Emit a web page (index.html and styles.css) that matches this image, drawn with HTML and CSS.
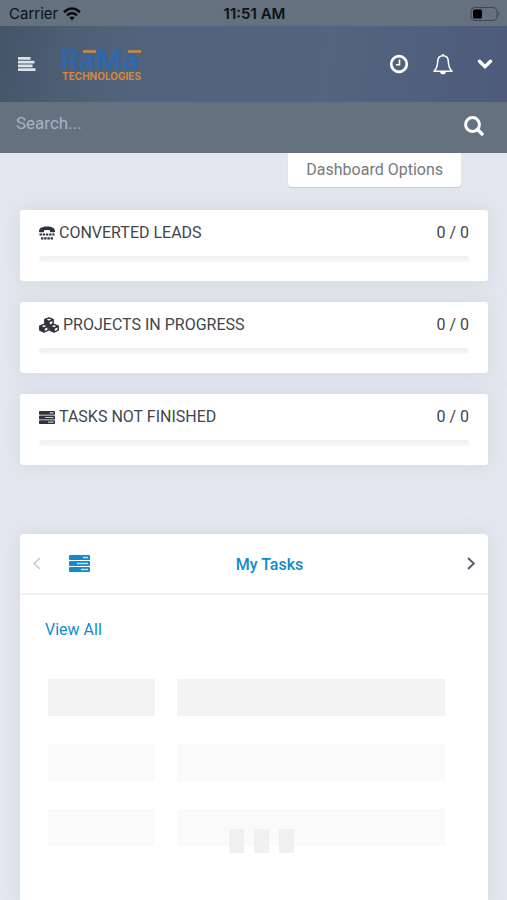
FILE: index.html
```html
<!DOCTYPE html>
<html lang="en">
<head>
<meta charset="utf-8">
<meta name="viewport" content="width=device-width, initial-scale=1">
<title>RaMa Technologies</title>
<link rel="stylesheet" href="styles.css">
</head>
<body>
<svg class="sprite" aria-hidden="true">
  <symbol id="icon-tasks" viewBox="0 0 21 17">
    <rect x="0" y="0" width="21" height="5" rx="1" fill="currentColor"/>
    <rect x="0" y="6" width="21" height="5" rx="1" fill="currentColor"/>
    <rect x="0" y="12" width="21" height="5" rx="1" fill="currentColor"/>
    <path d="M14 2.500h5M8 8.500h11M12 14.500h7" stroke="#fff" stroke-width="1.500" opacity=".75"/>
  </symbol>
</svg>

<div class="status">
  <div class="status-left">
    <span>Carrier</span>
    <svg width="18" height="14" viewBox="0 0 18 14" fill="none" stroke="currentColor" stroke-width="2.600" aria-hidden="true">
      <path d="M1 5.200Q9-2.200 17 5.200M4 8.400Q9 3.700 14 8.400"/>
      <path d="M9 13.500L6.200 10.600Q9 8.200 11.800 10.600Z" fill="currentColor" stroke="none"/>
    </svg>
  </div>
  <strong class="time">11:51 AM</strong>
  <svg class="battery" width="30" height="14" viewBox="0 0 30 14" aria-hidden="true">
    <rect x="1" y=".5" width="26" height="13" rx="4" fill="none" stroke="#3f4751"/>
    <rect x="3" y="2.500" width="9" height="9" rx="1.500" fill="#000"/>
    <path d="M28.300 4.500Q30.300 7 28.300 9.500Z" fill="#3f4751"/>
  </svg>
</div>

<header class="navbar">
  <button class="icon-btn" type="button" aria-label="Menu">
    <svg width="18" height="14" viewBox="0 0 18 14" stroke="currentColor" stroke-width="2.900" aria-hidden="true"><path d="M0 1.400h12.500M0 5.100h16.500M0 8.900h14.500M0 12.600h17.500"/></svg>
  </button>
  <a class="logo" href="#" aria-label="RaMa Technologies">
    <svg width="90" height="38" viewBox="0 0 90 38" aria-hidden="true">
      <text class="logo-name" x="-2" y="25">RaMa</text>
      <path d="M21 6.500h13M66 6.500h13" stroke="#d5883b" stroke-width="2.400"/>
      <text class="logo-sub" x="0" y="35">TECHNOLOGIES</text>
    </svg>
  </a>
  <nav class="actions">
    <button class="icon-btn" type="button" aria-label="Timers">
      <svg width="20" height="20" viewBox="0 0 20 20" fill="none" stroke="currentColor" aria-hidden="true"><circle cx="10" cy="10" r="7.800" stroke-width="2.700"/><path d="M10.500 5.500v5.300H7" stroke-width="1.600"/></svg>
    </button>
    <button class="icon-btn" type="button" aria-label="Notifications">
      <svg width="20" height="22" viewBox="0 0 20 22" fill="none" stroke="currentColor" stroke-width="1.500" aria-hidden="true"><path d="M10 1v2M1 18.200C4 15.500 4.500 13 4.700 8.500 4.900 4.500 7 2.800 10 2.800s5.100 1.700 5.300 5.700c.2 4.500.7 7 3.700 9.700Z" stroke-linejoin="round"/><path d="M7 18.500h6c0 3.800-6 3.800-6 0Z" fill="currentColor" stroke="none"/></svg>
    </button>
    <button class="icon-btn" type="button" aria-label="More">
      <svg width="16" height="11" viewBox="0 0 16 11" fill="none" stroke="currentColor" stroke-width="3.400" aria-hidden="true"><path d="M2.500 2.200l5.500 5.500 5.500-5.500" stroke-linecap="round"/></svg>
    </button>
  </nav>
</header>

<form class="search" role="search">
  <input type="search" aria-label="Search" placeholder="Search...">
  <button class="icon-btn" type="button" aria-label="Submit search">
    <svg width="20" height="20" viewBox="0 0 20 20" fill="none" stroke="currentColor" aria-hidden="true"><circle cx="8.500" cy="8.500" r="6.900" stroke-width="3"/><path d="M13.500 13.500l4.500 4.500" stroke-width="3.400" stroke-linecap="round"/></svg>
  </button>
</form>

<main class="content">
  <button class="options" type="button">Dashboard Options</button>

  <section class="stats">
    <article class="stat">
      <div class="stat-row">
        <h2>
          <svg width="16" height="14" viewBox="0 0 16 14" fill="currentColor" aria-hidden="true"><path d="M0 5.300C0 2 3 .5 8 .5s8 1.500 8 4.800c0 .8-.3 1-1 1h-3c-.7 0-1-.3-1-1V4.300Q8 3.500 5 4.300v1c0 .7-.3 1-1 1H1c-.7 0-1-.2-1-1Z"/><path d="M.5 8.500h15M2 12.300h12" stroke="currentColor" stroke-width="2.200" stroke-dasharray="2.400 .8"/></svg>
          Converted Leads
        </h2>
        <span>0 / 0</span>
      </div>
      <div class="bar"></div>
    </article>
    <article class="stat">
      <div class="stat-row">
        <h2>
          <svg width="20" height="16" viewBox="0 0 20 16" stroke="currentColor" stroke-width="1.200" stroke-linejoin="round" aria-hidden="true"><g id="cube"><path d="M10 .8l4.300 1.700v4.300L10 8.700 5.700 6.800V2.500Z" fill="currentColor"/><path d="M6.200 2.600L10 1l3.800 1.600L10 4.200Z" fill="#fff"/><path d="M10.800 5.200l2.600-1.100v2.200l-2.600 1.200Z" fill="#fff" stroke="none"/></g><use href="#cube" x="-5" y="6.500"/><use href="#cube" x="5" y="6.500"/></svg>
          Projects In Progress
        </h2>
        <span>0 / 0</span>
      </div>
      <div class="bar"></div>
    </article>
    <article class="stat">
      <div class="stat-row">
        <h2>
          <svg width="16" height="13" viewBox="0 0 21 17" preserveAspectRatio="none" aria-hidden="true"><use href="#icon-tasks" width="21" height="17"/></svg>
          Tasks Not Finished
        </h2>
        <span>0 / 0</span>
      </div>
      <div class="bar"></div>
    </article>
  </section>

  <section class="panel">
    <div class="tabs">
      <button class="arrow muted" type="button" aria-label="Previous tab">
        <svg width="8" height="13" viewBox="0 0 8 13" fill="none" stroke="currentColor" stroke-width="1.500" aria-hidden="true"><path d="M7 1L1.200 6.500 7 12"/></svg>
      </button>
      <a class="tab" href="#">
        <svg width="21" height="17" aria-hidden="true"><use href="#icon-tasks"/></svg>
        <span>My Tasks</span>
      </a>
      <button class="arrow" type="button" aria-label="Next tab">
        <svg width="8" height="13" viewBox="0 0 8 13" fill="none" stroke="currentColor" stroke-width="2" aria-hidden="true"><path d="M1 1l5.800 5.500L1 12"/></svg>
      </button>
    </div>
    <div class="panel-body">
      <a class="view-all" href="#">View All</a>
      <div class="skeleton" aria-hidden="true">
        <i class="first"></i><i class="first"></i>
        <i></i><i></i>
        <i></i><i></i>
        <div class="dots"><b></b><b></b><b></b></div>
      </div>
    </div>
  </section>
</main>
</body>
</html>
```
FILE: styles.css
```css
* { box-sizing: border-box; }

body {
  margin: 0;
  min-height: 100vh;
  display: flex;
  flex-direction: column;
  background: #e3e7ef;
  color: #42454d;
  font: 16px/20px Roboto, "Liberation Sans", sans-serif;
}

button, input { font: inherit; }
a { color: #118bcb; text-decoration: none; }
svg { display: block; flex: none; }
.sprite { position: absolute; width: 0; height: 0; }

.icon-btn {
  display: block;
  padding: 0;
  border: 0;
  background: none;
  color: #fff;
}

/* Device status bar */
.status {
  display: grid;
  grid-template-columns: 1fr auto 1fr;
  align-items: center;
  height: 26px;
  padding: 2px 7px 0 9px;
  background: #65717f;
  color: #0c1015;
  font-family: Inter, sans-serif;
  font-size: 15px;
}
.status-left { display: flex; align-items: center; gap: 5px; }
.time { font-weight: 600; }
.battery { justify-self: end; }

/* Navigation */
.navbar {
  display: flex;
  align-items: center;
  height: 76px;
  padding: 0 14px 0 18px;
  background: linear-gradient(100deg, #445468 0%, #4c5d74 12%, #52647d 28%, #52647e 65%, #4e5b7b 100%);
}
.navbar > .icon-btn { color: #dfe3e8; }
.logo { margin-left: 26px; }
.logo svg { overflow: visible; }
.logo-name { font: 600 29px Inter, sans-serif; fill: #2d68ae; }
.logo-sub { font: bold 10px Inter, sans-serif; fill: #d5883b; }
.actions { display: flex; align-items: center; gap: 24px; margin-left: auto; }

.search {
  display: flex;
  align-items: center;
  height: 51px;
  padding: 0 23px 4px 16px;
  background: #65717f;
}
.search input {
  flex: 1;
  min-width: 0;
  height: 32px;
  padding: 0 0 6px;
  border: 0;
  outline: 0;
  background: none;
  color: #fff;
  font-size: 17px;
}
.search input::placeholder { color: #a5b3c4; opacity: 1; }

/* Dashboard */
.content {
  flex: 1;
  display: flex;
  flex-direction: column;
  padding: 0 19px 0 20px;
}
.options {
  align-self: flex-end;
  height: 34px;
  margin-right: 27px;
  padding: 0 18px;
  border: 0;
  border-radius: 0 0 4px 4px;
  background: #fff;
  box-shadow: 0 1px 1px #c8ccd2;
  color: #77797c;
}
.stats { display: grid; gap: 21px; margin-top: 23px; }
.stat {
  height: 71px;
  padding: 13px 19px 0;
  border-radius: 3px;
  background: #fff;
  box-shadow: 0 0 20px rgba(200, 207, 212, .6);
}
.stat-row { display: flex; justify-content: space-between; }
.stat h2 {
  display: flex;
  align-items: center;
  gap: 4px;
  margin: 0;
  font-size: 16px;
  font-weight: 400;
  text-transform: uppercase;
}
.stat h2 svg { color: #30333d; }
.bar {
  height: 6px;
  margin-top: 13px;
  border-radius: 3px;
  background: linear-gradient(#eeeff0, #f8f8f8);
}

.panel {
  flex: 1;
  margin-top: 69px;
  border-radius: 4px 4px 0 0;
  background: #fff;
  box-shadow: 0 0 20px rgba(200, 207, 212, .6);
}
.tabs {
  display: flex;
  align-items: center;
  height: 61px;
  padding: 0 13px;
  border-bottom: 2px solid #f0f1f4;
}
.arrow { padding: 0; border: 0; background: none; color: #5c5c75; }
.muted { color: #c6c6c8; }
.tab {
  flex: 1;
  display: flex;
  align-items: center;
  padding: 0 16px 0 28px;
  font-weight: 500;
}
.tab span { flex: 1; padding: 2px 2px 0 0; text-align: center; }
.panel-body { padding: 25px 43px 53px 28px; }
.view-all { display: block; margin-left: -3px; }
.skeleton {
  position: relative;
  display: grid;
  grid-template-columns: 2fr 5fr;
  gap: 28px 22px;
  margin-top: 39px;
}
.skeleton i { height: 37px; background: #fafafa; }
.skeleton .first { background: #f3f3f3; }
.dots {
  position: absolute;
  bottom: -7px;
  left: 50%;
  display: flex;
  gap: 10px;
  margin-left: -18px;
}
.dots b { width: 15px; height: 24px; background: #f0f0f0; }
```
